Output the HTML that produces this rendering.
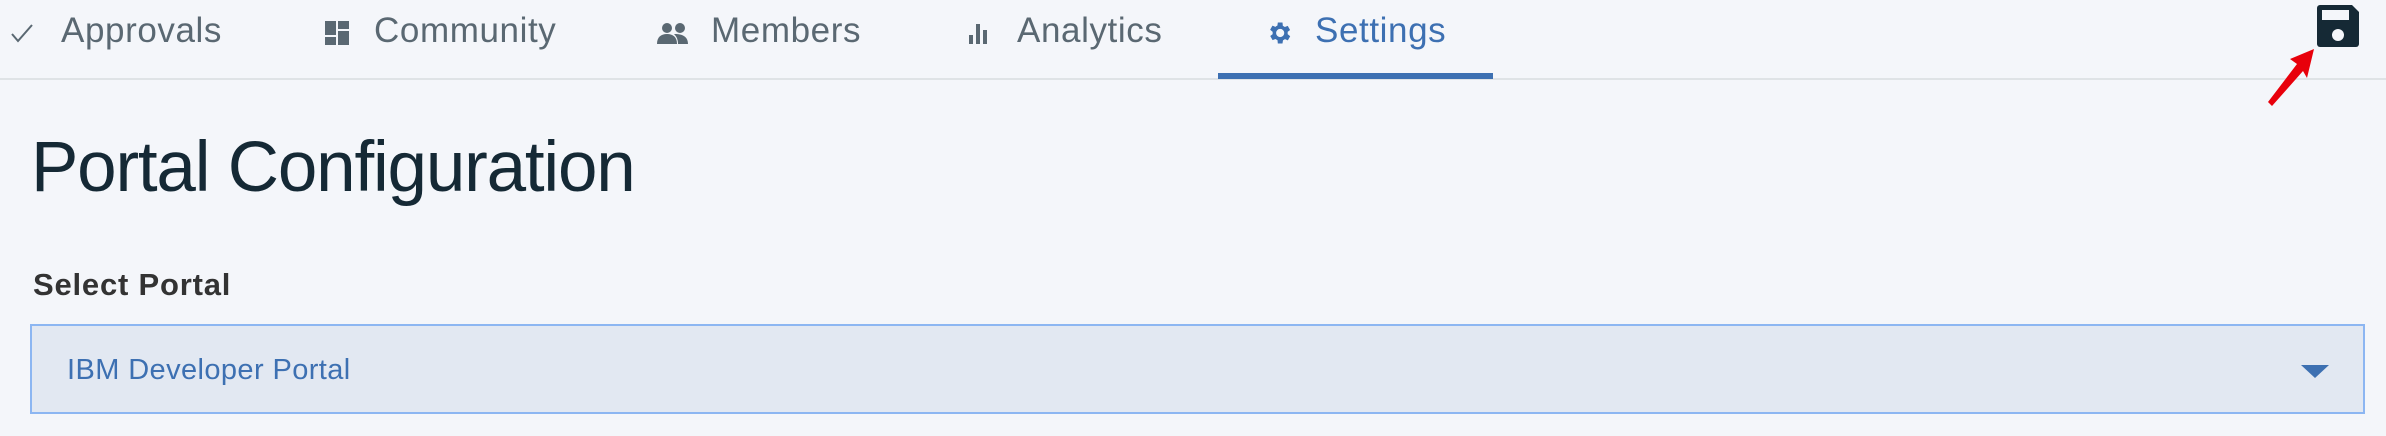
<!DOCTYPE html>
<html><head><style>
body{margin:0;width:2386px;height:436px;background:#f4f6fa;font-family:"Liberation Sans",sans-serif;position:relative;overflow:hidden}
.t{position:absolute;top:11px;font-size:35px;letter-spacing:0.6px;color:#5a6872;line-height:40px}
.ic{position:absolute}
</style></head><body>
<div style="position:absolute;left:0;top:78px;width:2386px;height:2px;background:#dfe3e6"></div>
<div style="position:absolute;left:1218px;top:73px;width:275px;height:6px;background:#3d70b2"></div>
<svg class="ic" style="left:10px;top:22px" width="24" height="22"><path d="M2 12l6 7L22 3" stroke="#5a6872" stroke-width="2" fill="none"/></svg>
<div class="t" style="left:61px">Approvals</div>
<svg class="ic" style="left:324px;top:20px" width="26" height="26"><rect x="1" y="1" width="11" height="14" fill="#5a6872"/><rect x="14" y="1" width="11" height="8" fill="#5a6872"/><rect x="1" y="17" width="11" height="8" fill="#5a6872"/><rect x="14" y="11" width="11" height="14" fill="#5a6872"/></svg>
<div class="t" style="left:374px">Community</div>
<svg class="ic" style="left:657px;top:22px" width="32" height="24"><circle cx="10" cy="6" r="5" fill="#5a6872"/><circle cx="23" cy="6" r="5" fill="#5a6872"/><path d="M0 22c0-7 4-10 10-10s10 3 10 10z" fill="#5a6872"/><path d="M17 12c6 0 14 1 14 10H21c0-4-1-7-4-10z" fill="#5a6872"/></svg>
<div class="t" style="left:711px">Members</div>
<svg class="ic" style="left:968px;top:22px" width="22" height="24"><rect x="1" y="13" width="4" height="9" fill="#5a6872"/><rect x="8" y="2" width="4" height="20" fill="#5a6872"/><rect x="15" y="8" width="4" height="14" fill="#5a6872"/></svg>
<div class="t" style="left:1017px">Analytics</div>
<svg class="ic" style="left:1265px;top:19px" width="28" height="28" viewBox="0 0 24 24"><path fill="#3d70b2" d="M19.4 13a7.5 7.5 0 000-2l2.1-1.6-2-3.5-2.5 1a7 7 0 00-1.7-1L15 3h-4l-.4 2.7a7 7 0 00-1.7 1l-2.5-1-2 3.5L6.6 11a7.5 7.5 0 000 2l-2.1 1.6 2 3.5 2.5-1a7 7 0 001.7 1L11 21h4l.4-2.7a7 7 0 001.7-1l2.5 1 2-3.5zM13 15.5a3.5 3.5 0 110-7 3.5 3.5 0 010 7z"/></svg>
<div class="t" style="left:1315px;color:#3d70b2">Settings</div>
<svg class="ic" style="left:2316px;top:4px" width="44" height="44"><path d="M4 1h32l7 7v32a3 3 0 01-3 3H4a3 3 0 01-3-3V4a3 3 0 013-3z" fill="#152935"/><rect x="6" y="6" width="27" height="10" fill="#f4f6fa"/><circle cx="22" cy="31" r="6" fill="#f4f6fa"/></svg>
<svg class="ic" style="left:2260px;top:45px" width="60" height="65"><path d="M54 4L30 14l7 5L8 57l4 4 31-35 4 7z" fill="#e8000b"/></svg>
<div style="position:absolute;left:31px;top:126px;font-size:71px;letter-spacing:-1.2px;color:#152935;line-height:84px">Portal Configuration</div>
<div style="position:absolute;left:33px;top:268px;font-size:31px;letter-spacing:0.8px;font-weight:bold;color:#333;line-height:34px">Select Portal</div>
<div style="position:absolute;left:30px;top:324px;width:2331px;height:86px;border:2px solid #8cb6f2;background:#e2e8f2"></div>
<div style="position:absolute;left:67px;top:353px;font-size:29px;letter-spacing:0.4px;color:#3d70b2;line-height:34px">IBM Developer Portal</div>
<svg class="ic" style="left:2301px;top:365px" width="28" height="13"><path d="M0 0h28L14 13z" fill="#3d70b2"/></svg>
</body></html>
